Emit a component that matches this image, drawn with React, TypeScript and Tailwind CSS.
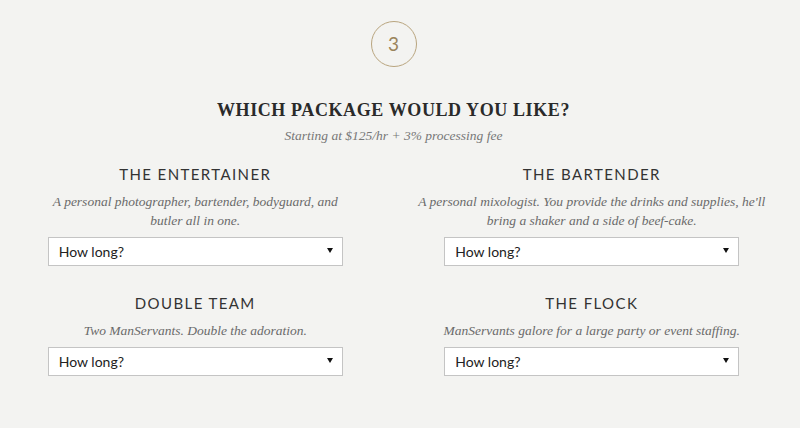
const packages = [
  {
    name: "THE ENTERTAINER",
    lines: ["A personal photographer, bartender, bodyguard, and", "butler all in one."],
  },
  {
    name: "THE BARTENDER",
    lines: ["A personal mixologist. You provide the drinks and supplies, he'll", "bring a shaker and a side of beef-cake."],
  },
  {
    name: "DOUBLE TEAM",
    lines: ["Two ManServants. Double the adoration."],
  },
  {
    name: "THE FLOCK",
    lines: ["ManServants galore for a large party or event staffing."],
  },
];

function DurationSelect() {
  return (
    <div className="flex h-[29px] w-[295px] items-center justify-between border border-[#c4c4c4] bg-white pl-[10px] pr-[8px]">
      <span className="font-['Lato',sans-serif] text-[14px] text-[#222]">How long?</span>
      <svg width="6" height="5" viewBox="0 0 6 5" className="mr-[1px] mt-[-2px]">
        <polygon points="0,0 6,0 3,5" fill="#111" />
      </svg>
    </div>
  );
}

export default function App() {
  return (
    <div className="min-h-[428px] w-full bg-[#f3f3f1]">
      <div className="flex w-[787px] flex-col items-center pt-[21px]">
        {/* step marker */}
        <div className="flex h-[46px] w-[46px] items-center justify-center rounded-full border border-[#b9a57f]">
          <span className="font-['Lato',sans-serif] text-[19px] text-[#9a845c]">3</span>
        </div>

        <h2 className="mt-[31px] font-['Liberation_Serif',serif] text-[18px] font-bold leading-[24px] tracking-[0.6px] text-[#2a2a2a]">
          WHICH PACKAGE WOULD YOU LIKE?
        </h2>
        <p className="mt-[5px] font-['Liberation_Serif',serif] text-[13.5px] italic leading-[18px] text-[#777]">
          Starting at $125/hr + 3% processing fee
        </p>

        <div className="mt-[19px] grid grid-cols-[391px_391px] gap-x-[5.5px] gap-y-[27px]">
          {packages.map((p) => (
            <div key={p.name} className="flex flex-col items-center">
              <h3 className="font-['Lato',sans-serif] text-[15px] leading-[20px] tracking-[1.4px] text-[#333]">
                {p.name}
              </h3>
              <p className="mt-[8px] text-center font-['Liberation_Serif',serif] text-[13.5px] italic leading-[19px] text-[#6a6a6a]">
                {p.lines.map((l, i) => (
                  <span key={i} className="block whitespace-nowrap">
                    {l}
                  </span>
                ))}
              </p>
              <div className="mt-[7px]">
                <DurationSelect />
              </div>
            </div>
          ))}
        </div>
      </div>
    </div>
  );
}
